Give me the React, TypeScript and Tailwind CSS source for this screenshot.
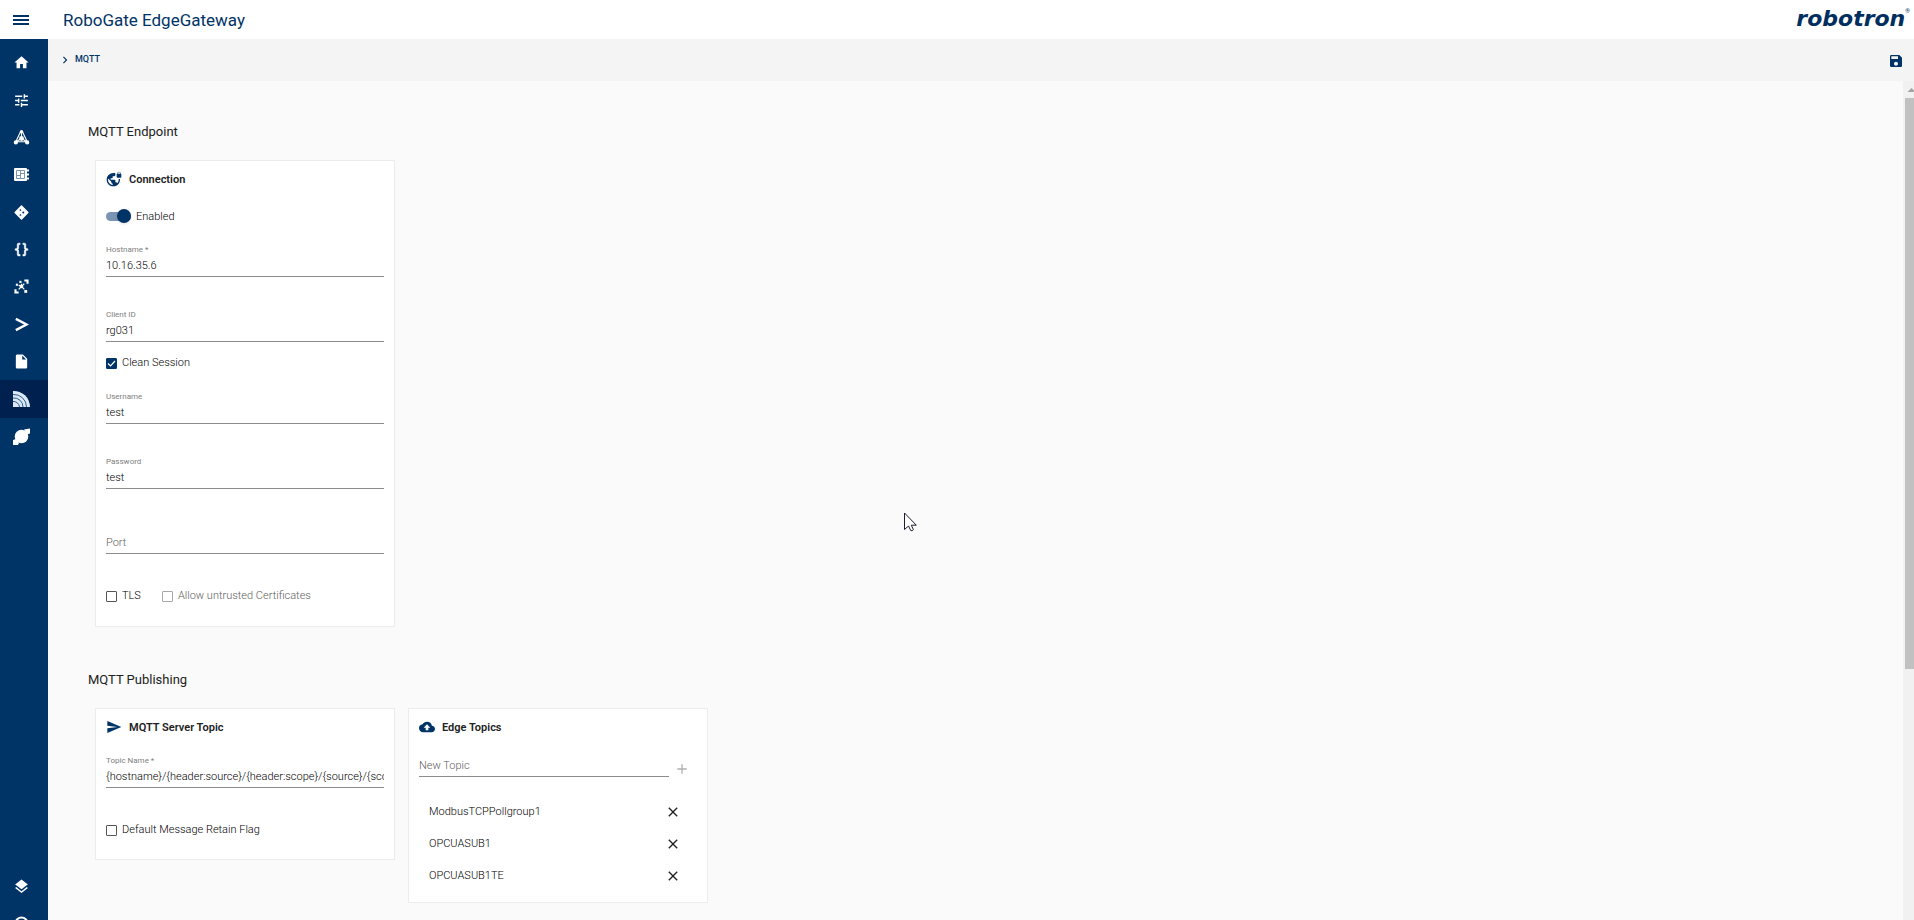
import { useId } from 'react'
import type { ReactNode } from 'react'
import {
    MdAdd,
    MdBackup,
    MdChevronRight,
    MdClose,
    MdHome,
    MdInsertDriveFile,
    MdLayers,
    MdSave,
    MdSend,
    MdTune,
    MdVpnLock,
} from 'react-icons/md'

type NavItem = {
    name: string
    icon: ReactNode
    active?: boolean
}

const MenuIcon = (): JSX.Element => (
    <svg width="21" height="21" viewBox="0 0 21 21" fill="currentColor">
        <path d="M2 5h16v2H2zM2 9h16v2H2zM2 13h16v2H2z" />
    </svg>
)

const TriangleIcon = (): JSX.Element => (
    <svg width="17" height="17" viewBox="0 0 24 24" fill="none" stroke="currentColor" strokeWidth="1.6">
        <path d="M11 3 4 18h16L13 3M12 4v9L5 18M12 13l7 5" />
        <circle cx="12" cy="4" r="2.500" fill="currentColor" stroke="none" />
        <circle cx="12" cy="13.500" r="3.500" fill="currentColor" stroke="none" />
        <circle cx="4" cy="19" r="2.200" fill="currentColor" />
        <circle cx="20" cy="19" r="2.200" fill="currentColor" />
    </svg>
)

const BoardIcon = (): JSX.Element => (
    <svg width="17" height="17" viewBox="0 0 17 17" fill="none">
        <rect x="1" y="2" width="13" height="13" rx="1" fill="currentColor" />
        <path d="M13 4.500h3M13 8.500h3M13 12.500h3" stroke="currentColor" strokeWidth="2" />
        <path d="M3.500 4.500h8v8h-8zM7.500 4.500v8M3.500 9.500h4M7.500 7.500h4" stroke="#7c93ab" strokeWidth="1" />
    </svg>
)

const DiamondIcon = (): JSX.Element => (
    <svg width="17" height="17" viewBox="0 0 24 24" fill="currentColor">
        <path d="M12 3 3 12 12 21 21 12z" stroke="currentColor" strokeWidth="2" strokeLinejoin="round" />
        <g className="fill-[#003366]">
            <circle cx="10.500" cy="8.500" r="1.200" />
            <circle cx="10.500" cy="15.500" r="1.200" />
            <circle cx="14.500" cy="12" r="1.400" />
        </g>
    </svg>
)

const BracesIcon = (): JSX.Element => (
    <svg width="17" height="17" viewBox="0 0 24 24" fill="currentColor" stroke="currentColor" strokeWidth="0.8">
        <path d="M8 3a2 2 0 0 0-2 2v4a2 2 0 0 1-2 2H3v2h1a2 2 0 0 1 2 2v4a2 2 0 0 0 2 2h2v-2H8v-5a2 2 0 0 0-2-2 2 2 0 0 0 2-2V5h2V3zM16 3a2 2 0 0 1 2 2v4a2 2 0 0 0 2 2h1v2h-1a2 2 0 0 0-2 2v4a2 2 0 0 1-2 2h-2v-2h2v-5a2 2 0 0 1 2-2 2 2 0 0 1-2-2V5h-2V3z" />
    </svg>
)

const NodesIcon = (): JSX.Element => (
    <svg width="17" height="17" viewBox="0 0 24 24" fill="none" stroke="currentColor" strokeWidth="1.8">
        <path d="M8 16l4-4 4-4M12 12l-4-2M12 8v4l4 4" />
        <g fill="currentColor" stroke="none">
            <path d="M2 16h3v3h3v3H2z" />
            <path d="M16 2h6v6h-3V5h-3z" />
            <rect x="9" y="4" width="3" height="3" />
            <rect x="4" y="8" width="3" height="3" />
            <rect x="16" y="17" width="4" height="4" />
            <circle cx="12" cy="12" r="2.500" />
        </g>
    </svg>
)

const PromptIcon = (): JSX.Element => (
    <svg width="17" height="17" viewBox="0 0 24 24" fill="none" stroke="currentColor" strokeWidth="3.4">
        <path d="M4 4 19 12 4 20" />
    </svg>
)

const MqttIcon = (): JSX.Element => (
    <svg width="17" height="17" viewBox="0 0 17 17">
        <path d="M0 1a16 16 0 0 1 17 16H0z" fill="#dce9f5" />
        <path
            d="M0 4.500A12.500 12.500 0 0 1 13.500 17M0 8A9 9 0 0 1 10 17M0 11.500A6 6 0 0 1 6.500 17"
            fill="none"
            stroke="#2a5c9a"
            strokeWidth="1"
        />
    </svg>
)

const SatelliteIcon = (): JSX.Element => (
    <svg width="17" height="17" viewBox="0 0 17 17" fill="currentColor">
        <circle cx="8.500" cy="8.500" r="6.800" />
        <path d="M11 1.500 17 .500v5l-3 1zM0 12l3-1 3 4-1 2H0z" />
    </svg>
)

const navItems: NavItem[] = [
    { name: 'Home', icon: <MdHome size={17} /> },
    { name: 'Settings', icon: <MdTune size={17} /> },
    { name: 'Network', icon: <TriangleIcon /> },
    { name: 'Devices', icon: <BoardIcon /> },
    { name: 'Routing', icon: <DiamondIcon /> },
    { name: 'Variables', icon: <BracesIcon /> },
    { name: 'Flows', icon: <NodesIcon /> },
    { name: 'Console', icon: <PromptIcon /> },
    { name: 'Files', icon: <MdInsertDriveFile size={17} /> },
    { name: 'MQTT', icon: <MqttIcon />, active: true },
    { name: 'Cloud', icon: <SatelliteIcon /> },
]

const topics = ['ModbusTCPPollgroup1', 'OPCUASUB1', 'OPCUASUB1TE']

const NavLink = ({ name, icon, active }: NavItem): JSX.Element => (
    <a
        href="#"
        aria-label={name}
        className={`flex h-full items-center pl-[13px] text-white ${active ? 'bg-[#002050]' : ''}`}
    >
        {icon}
    </a>
)

const Card = ({ icon, title, children }: { icon: ReactNode; title: string; children: ReactNode }): JSX.Element => (
    <div className="w-[300px] border border-[#ececec] bg-white px-[10px]">
        <h3 className="flex h-9 items-center gap-[7px] text-[11px] font-semibold">
            <span className="text-[#003366]">{icon}</span>
            <span className="pt-[2px]">{title}</span>
        </h3>
        {children}
    </div>
)

type FieldProps = {
    label: string
    value?: string
    floating?: boolean
}

const Field = ({ label, value, floating = true }: FieldProps): JSX.Element => {
    const id = useId()
    return (
        <div className="flex h-[33px] w-full flex-col justify-end border-b border-[#8c8c8c]">
            {floating && (
                <label htmlFor={id} className="text-[8px] leading-3 text-[#808080]">
                    {label}
                </label>
            )}
            <input
                id={id}
                type="text"
                aria-label={floating ? undefined : label}
                placeholder={floating ? undefined : label}
                defaultValue={value}
                className="h-5 w-full pb-[2px] text-[11px] font-light text-black outline-none placeholder:text-[#606060]"
            />
        </div>
    )
}

type CheckboxProps = {
    label: string
    checked?: boolean
    disabled?: boolean
}

const Checkbox = ({ label, checked, disabled }: CheckboxProps): JSX.Element => (
    <label
        className={`flex h-5 items-center gap-[5px] text-[11px] font-light ${disabled ? 'text-[#606060]' : 'text-black'}`}
    >
        <span className="relative flex">
            <input
                type="checkbox"
                defaultChecked={checked}
                disabled={disabled}
                className="peer size-[11px] appearance-none rounded-[1px] border border-[#555] checked:border-[#003366] checked:bg-[#003366] disabled:border-[#a8a8a8]"
            />
            <svg
                viewBox="0 0 11 11"
                className="pointer-events-none absolute inset-0 hidden size-[11px] peer-checked:block"
                fill="none"
                stroke="white"
                strokeWidth="1.200"
            >
                <path d="M2 5.500 4.500 8 9 3" />
            </svg>
        </span>
        {label}
    </label>
)

const App = (): JSX.Element => {
    return (
        <div className="flex h-screen flex-col overflow-hidden bg-[#fafafa] font-[Roboto,sans-serif] text-[#212121]">
            <header className="flex h-[39px] shrink-0 items-center bg-white text-[#003366]">
                <button type="button" aria-label="Menu" className="ml-[11px] pt-[2px]">
                    <MenuIcon />
                </button>
                <h1 className="ml-[31px] pt-[3px] text-[17px]">RoboGate EdgeGateway</h1>
                <div className="mr-1 ml-auto flex items-start pb-[2px]">
                    <span className="font-['DejaVu_Sans',sans-serif] text-[22px] leading-7 font-bold text-[#002f5f] italic">
                        robotron
                    </span>
                    <span className="pt-[3px] text-[6px] leading-none">®</span>
                </div>
            </header>
            <div className="flex min-h-0 flex-1">
                <nav className="flex w-12 shrink-0 flex-col overflow-hidden bg-[#003366] pt-[5px]">
                    <ul className="flex h-[411px] shrink-0 flex-col">
                        {navItems.map((item) => (
                            <li key={item.name} className="flex-1">
                                <NavLink {...item} />
                            </li>
                        ))}
                    </ul>
                    <ul className="mt-auto h-[52px]">
                        <li className="h-[37px]">
                            <NavLink name="Layers" icon={<MdLayers size={17} />} />
                        </li>
                        <li className="h-[37px]">
                            <NavLink
                                name="About"
                                icon={
                                    <svg width="17" height="17" viewBox="0 0 17 17" fill="none" stroke="currentColor" strokeWidth="2">
                                        <circle cx="8.500" cy="8.500" r="6" />
                                    </svg>
                                }
                            />
                        </li>
                    </ul>
                </nav>
                <div className="flex min-w-0 flex-1 flex-col">
                    <div className="flex h-[42px] shrink-0 items-center justify-between bg-[#f4f4f4] px-[10px] text-[#003366]">
                        <a href="#" className="flex items-center gap-[3px] pb-px text-[9px] font-medium">
                            <MdChevronRight size={14} />
                            MQTT
                        </a>
                        <button type="button" aria-label="Save" className="pt-[2px]">
                            <MdSave size={16} />
                        </button>
                    </div>
                    <div className="flex min-h-0 flex-1">
                        <main className="min-w-0 flex-1 overflow-hidden pt-[41px] pl-10">
                            <section>
                                <h2 className="text-[13px] leading-5">MQTT Endpoint</h2>
                                <div className="mt-[18px] ml-[7px] flex items-start">
                                    <Card icon={<MdVpnLock size={16} />} title="Connection">
                                        <label className="flex h-[38px] items-center gap-[5px] text-[11px] font-light text-black">
                                            <input
                                                type="checkbox"
                                                role="switch"
                                                defaultChecked
                                                className="flex h-[9px] w-[25px] appearance-none items-center rounded-full bg-[#7a94b1] before:ml-auto before:size-[14px] before:rounded-full before:bg-[#003366] before:shadow-sm"
                                            />
                                            <span className="pt-[2px]">Enabled</span>
                                        </label>
                                        <div className="mt-[9px] flex flex-col gap-8">
                                            <Field label="Hostname *" value="10.16.35.6" />
                                            <Field label="Client ID" value="rg031" />
                                        </div>
                                        <div className="mt-[11px] mb-[18px]">
                                            <Checkbox label="Clean Session" checked />
                                        </div>
                                        <div className="flex flex-col gap-8 pb-5">
                                            <Field label="Username" value="test" />
                                            <Field label="Password" value="test" />
                                            <Field label="Port" floating={false} />
                                            <div className="flex gap-[21px]">
                                                <Checkbox label="TLS" />
                                                <Checkbox label="Allow untrusted Certificates" disabled />
                                            </div>
                                        </div>
                                    </Card>
                                </div>
                            </section>
                            <section className="mt-[43px]">
                                <h2 className="text-[13px] leading-5">MQTT Publishing</h2>
                                <div className="mt-[18px] ml-[7px] flex items-start gap-[13px]">
                                    <Card icon={<MdSend size={16} />} title="MQTT Server Topic">
                                        <div className="mt-[10px] flex flex-col gap-8 pb-[19px]">
                                            <Field
                                                label="Topic Name *"
                                                value="{hostname}/{header:source}/{header:scope}/{source}/{scope}"
                                            />
                                            <Checkbox label="Default Message Retain Flag" />
                                        </div>
                                    </Card>
                                    <Card icon={<MdBackup size={16} />} title="Edge Topics">
                                        <div className="flex h-8 items-end">
                                            <div className="w-[250px]">
                                                <Field label="New Topic" floating={false} />
                                            </div>
                                            <button type="button" aria-label="Add topic" className="ml-[5px] text-[#b0b0b0]">
                                                <MdAdd size={16} />
                                            </button>
                                        </div>
                                        <ul className="mt-[19px] mb-[10px] pr-4 pl-[10px] text-[11px] font-light text-black">
                                            {topics.map((topic) => (
                                                <li key={topic} className="flex h-8 items-center justify-between">
                                                    {topic}
                                                    <button type="button" aria-label={`Remove ${topic}`} className="text-[#212121]">
                                                        <MdClose size={16} />
                                                    </button>
                                                </li>
                                            ))}
                                        </ul>
                                    </Card>
                                </div>
                            </section>
                        </main>
                        <div className="w-[11px] shrink-0 bg-[#f1f1f1] pl-[2px]">
                            <svg width="9" height="17" viewBox="0 0 9 17" className="block">
                                <path d="M2.500 11 6.500 7l4 4z" fill="#a3a3a3" />
                            </svg>
                            <div className="h-[68%] bg-[#c1c1c1]" />
                        </div>
                    </div>
                </div>
            </div>
            <svg
                width="13"
                height="20"
                viewBox="0 0 13 20"
                className="pointer-events-none absolute top-[512px] left-[904px]"
            >
                <path
                    d="M.500 1v16.500l4-3.500 2.300 4.600q1.500.600 2.600-.900L7.300 13.200h5z"
                    fill="white"
                    stroke="#1c1c2c"
                    strokeWidth="1"
                />
            </svg>
        </div>
    )
}

export default App
